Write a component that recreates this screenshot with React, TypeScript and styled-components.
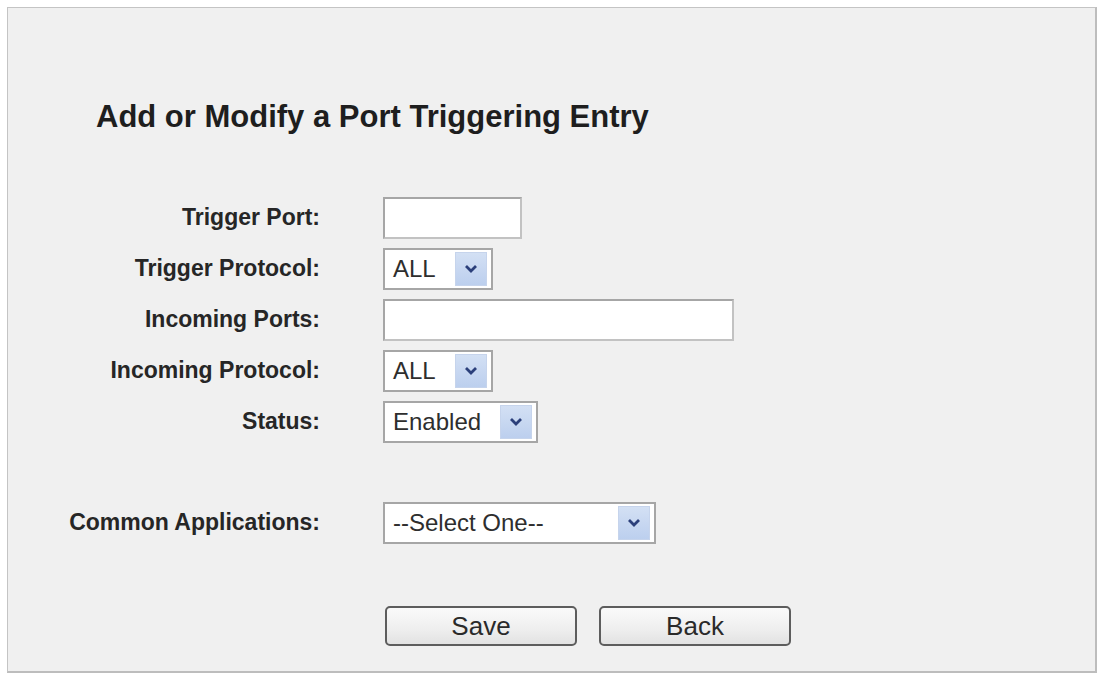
import styled, { createGlobalStyle } from 'styled-components';

const GlobalStyle = createGlobalStyle`
  html, body {
    margin: 0;
    padding: 0;
    background: #ffffff;
  }
  body {
    font-family: 'Liberation Sans', Arial, sans-serif;
  }
`;

interface IField {
  label: string;
  kind: 'input' | 'select';
  width: number;
  value?: string;
}

const fields: IField[] = [
  { label: 'Trigger Port:', kind: 'input', width: 139 },
  { label: 'Trigger Protocol:', kind: 'select', width: 110, value: 'ALL' },
  { label: 'Incoming Ports:', kind: 'input', width: 351 },
  { label: 'Incoming Protocol:', kind: 'select', width: 110, value: 'ALL' },
  { label: 'Status:', kind: 'select', width: 155, value: 'Enabled' },
];

const Chevron = () => (
  <svg width="14" height="9" viewBox="0 0 14 9">
    <path d="M2 2 L7 7 L12 2" fill="none" stroke="#2b3f7a" strokeWidth="2.8" />
  </svg>
);

const DropDown = ({ value, width }: { value: string; width: number }) => (
  <Select width={width}>
    <span>{value}</span>
    <Arrow>
      <Chevron />
    </Arrow>
  </Select>
);

const App = () => {
  return (
    <>
      <GlobalStyle />
      <Frame>
        <Title>Add or Modify a Port Triggering Entry</Title>
        <Form>
          {fields.map((f) => (
            <Row key={f.label}>
              <Label>{f.label}</Label>
              {f.kind === 'input' ? (
                <TextBox width={f.width} />
              ) : (
                <DropDown value={f.value ?? ''} width={f.width} />
              )}
            </Row>
          ))}
          <Row gapTop={50}>
            <Label>Common Applications:</Label>
            <DropDown value="--Select One--" width={273} />
          </Row>
        </Form>
        <Buttons>
          <Button>Save</Button>
          <Button>Back</Button>
        </Buttons>
      </Frame>
    </>
  );
};

const Frame = styled.div`
  box-sizing: border-box;
  margin: 7px 3px 2px 7px;
  height: 666px;
  border: 1px solid #c4c4c4;
  border-right: 2px solid #bdbdbd;
  border-bottom: 2px solid #bdbdbd;
  background: #f0f0f0;
  padding-top: 91px;
`;

const Title = styled.h1`
  margin: 0 0 0 88px;
  font-size: 31px;
  line-height: 36px;
  font-weight: 700;
  color: #1e1e1e;
`;

const Form = styled.div`
  display: flex;
  flex-direction: column;
  gap: 8px;
  margin-top: 61px;
`;

const Row = styled.div<{ gapTop?: number }>`
  display: grid;
  grid-template-columns: 312px auto;
  column-gap: 63px;
  align-items: center;
  height: 43px;
  margin-top: ${({ gapTop }) => gapTop ?? 0}px;
`;

const Label = styled.label`
  text-align: right;
  font-size: 23px;
  font-weight: 700;
  color: #262626;
`;

const TextBox = styled.div<{ width: number }>`
  box-sizing: border-box;
  width: ${({ width }) => width}px;
  height: 42px;
  background: #ffffff;
  border: 2px solid #a9a9a9;
  border-color: #a6a6a6 #c2c2c2 #c2c2c2 #a6a6a6;
`;

const Select = styled.div<{ width: number }>`
  box-sizing: border-box;
  width: ${({ width }) => width}px;
  height: 42px;
  display: flex;
  align-items: center;
  justify-content: space-between;
  padding: 3px 4px 3px 8px;
  background: #ffffff;
  border: 2px solid #a6a6a6;
  font-size: 24px;
  color: #2e2e2e;
`;

const Arrow = styled.div`
  width: 32px;
  height: 34px;
  flex-shrink: 0;
  display: flex;
  align-items: center;
  justify-content: center;
  background: linear-gradient(180deg, #d3e0f4 0%, #bccfee 100%);
  border: 1px solid #c6d4ec;
  box-sizing: border-box;
`;

const Buttons = styled.div`
  display: flex;
  gap: 22px;
  margin: 62px 0 0 377px;
`;

const Button = styled.button`
  width: 192px;
  height: 40px;
  border: 2px solid #5d5d5d;
  border-radius: 5px;
  background: linear-gradient(180deg, #fafafa 0%, #eeeeee 60%, #e2e2e2 100%);
  font-family: 'Liberation Sans', Arial, sans-serif;
  font-size: 26px;
  color: #2a2a2a;
  padding: 0;
`;

export default App;
